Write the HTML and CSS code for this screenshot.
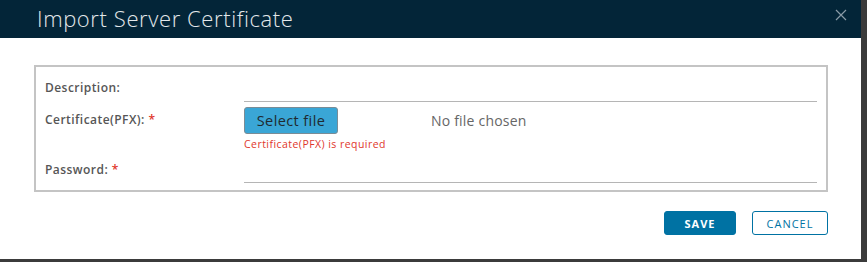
FILE: index.html
```html
<!DOCTYPE html>
<html lang="en">
<head>
    <meta charset="UTF-8">
    <meta name="viewport" content="width=device-width, initial-scale=1.0">
    <title>Import Server Certificate</title>
    <link rel="stylesheet" href="styles.css">
</head>
<body>
    <div class="modal">
        <div class="modal-header">
            <h3 class="modal-title">Import Server Certificate</h3>
            <button class="close-btn" aria-label="Close">
                <svg width="12" height="12" viewBox="0 0 12 12">
                    <path d="M1 1 L11 11 M11 1 L1 11" stroke="#8a9aa6" stroke-width="1.2" fill="none"/>
                </svg>
            </button>
        </div>
        <div class="modal-body">
            <div class="form-box">
                <div class="form-row row-desc">
                    <label class="form-label">Description:</label>
                    <div class="form-field">
                        <div class="text-input"></div>
                    </div>
                </div>
                <div class="form-row row-file">
                    <label class="form-label">Certificate(PFX): <span class="req">*</span></label>
                    <div class="form-field">
                        <div class="file-line">
                            <button class="file-btn">Select file</button>
                            <span class="file-name">No file chosen</span>
                        </div>
                        <div class="error-text">Certificate(PFX) is required</div>
                    </div>
                </div>
                <div class="form-row row-pass">
                    <label class="form-label">Password: <span class="req">*</span></label>
                    <div class="form-field">
                        <div class="text-input"></div>
                    </div>
                </div>
            </div>
        </div>
        <div class="modal-footer">
            <button class="btn btn-primary">SAVE</button>
            <button class="btn btn-outline">CANCEL</button>
        </div>
    </div>
</body>
</html>
```

FILE: styles.css
```css
body {
    margin: 0;
    background-color: #3b3b3b;
    font-family: "Open Sans", Arial, sans-serif;
    color: #565656;
}

.modal {
    width: 861px;
    height: 259px;
    background-color: #fff;
}

.modal-header {
    height: 38px;
    background-color: #032538;
    display: flex;
    align-items: center;
    justify-content: space-between;
    padding: 0 14px 0 37px;
}

.modal-title {
    margin: 0;
    font-family: "Open Sans", sans-serif;
    font-weight: 300;
    font-size: 22px;
    color: #e3e8eb;
    letter-spacing: 0.6px;
    position: relative;
    top: -1px;
}

.close-btn {
    background: none;
    border: none;
    padding: 0;
    width: 12px;
    height: 12px;
    position: relative;
    top: -4px;
    cursor: pointer;
}

.close-btn svg {
    display: block;
}

.modal-body {
    padding: 27px 33px 0 34px;
}

.form-box {
    border: 2px solid #c4c4c4;
    padding: 9px;
    height: 105px;
}

.form-row {
    display: flex;
}

.form-label {
    width: 199px;
    font-size: 12px;
    font-weight: 600;
    letter-spacing: 0.45px;
    color: #565656;
}

.row-desc .form-label {
    padding-top: 3px;
}

.req {
    color: #e0362b;
}

.form-field {
    flex: 1;
}

.text-input {
    height: 25px;
    border-bottom: 1px solid #b5b5b5;
}

.row-file {
    margin-top: 5px;
}

.row-file .form-label {
    padding-top: 4px;
}

.file-line {
    display: flex;
    align-items: center;
}

.file-btn {
    width: 94px;
    height: 27px;
    background-color: #3aa6d6;
    border: 1px solid #7a8c96;
    border-radius: 3px;
    font-family: "Open Sans", sans-serif;
    font-size: 14.5px;
    letter-spacing: 0.4px;
    color: #1f2a30;
    padding: 0;
}

.file-name {
    margin-left: 93px;
    font-size: 14px;
    letter-spacing: 0.2px;
    color: #666;
}

.error-text {
    font-size: 10.5px;
    letter-spacing: 0.45px;
    color: #e0362b;
    margin-top: 3px;
}

.row-pass .form-label {
    padding-top: 10px;
}

.row-pass .text-input {
    height: 31px;
}

.modal-footer {
    display: flex;
    justify-content: flex-end;
    gap: 16px;
    padding: 19px 33px 0 0;
}

.btn {
    height: 24px;
    font-family: "Open Sans", sans-serif;
    font-size: 11px;
    letter-spacing: 1px;
    border-radius: 3px;
    padding: 0;
}

.btn-primary {
    width: 72px;
    background-color: #0072a3;
    border: 1px solid #0072a3;
    color: #fff;
    font-weight: 700;
}

.btn-outline {
    width: 76px;
    background-color: #fff;
    border: 1px solid #0072a3;
    color: #0072a3;
    font-weight: 400;
}
```
